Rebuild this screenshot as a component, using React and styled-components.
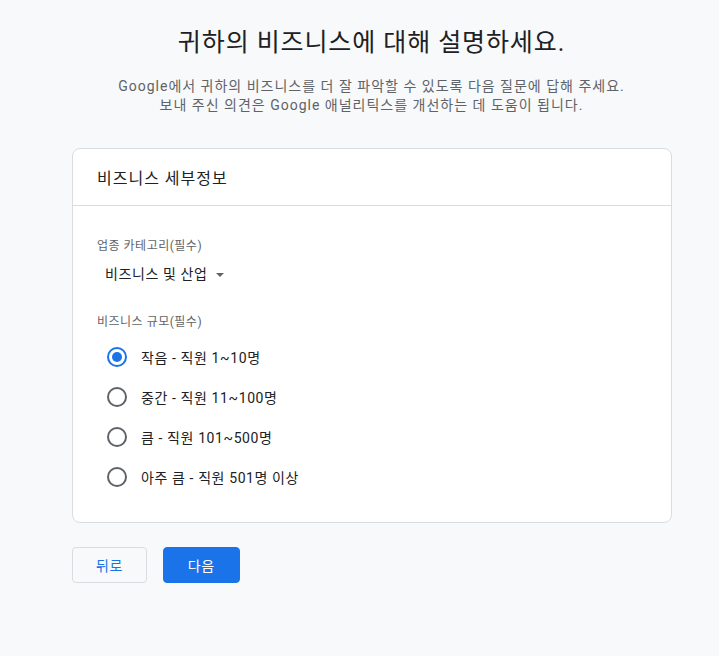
import React, { useState } from "react";
import styled, { createGlobalStyle } from "styled-components";

const GlobalStyle = createGlobalStyle`
  html, body {
    margin: 0;
    padding: 0;
    background: #f8f9fa;
    font-family: Roboto, "Noto Sans CJK KR", sans-serif;
    color: #202124;
  }
`;

const Page = styled.div`
  width: 719px;
  min-height: 656px;
  box-sizing: border-box;
  padding: 26px 48px 0 72px;
  display: flex;
  flex-direction: column;
`;

const Title = styled.h1`
  margin: 0;
  font-size: 25px;
  font-weight: 400;
  line-height: 34px;
  letter-spacing: 0.9px;
  text-align: center;
  color: #202124;
`;

const Subtitle = styled.p`
  margin: 17px 0 0;
  font-size: 14px;
  line-height: 19px;
  letter-spacing: 1px;
  text-align: center;
  color: #5f6368;
`;

const Card = styled.section`
  margin-top: 33px;
  width: 600px;
  box-sizing: border-box;
  background: #ffffff;
  border: 1px solid #dadce0;
  border-radius: 8px;
`;

const CardHeader = styled.div`
  height: 56px;
  display: flex;
  align-items: center;
  padding: 0 24px;
  font-size: 16px;
  letter-spacing: 1px;
  border-bottom: 1px solid #dadce0;
`;

const CardBody = styled.div`
  padding: 31px 24px 25px;
  display: flex;
  flex-direction: column;
`;

const Label = styled.div`
  font-size: 12px;
  line-height: 18px;
  letter-spacing: 0.5px;
  color: #5f6368;
`;

const Select = styled.button`
  margin: 9px 0 29px 8px;
  padding: 0;
  border: none;
  background: none;
  display: flex;
  align-items: center;
  gap: 8px;
  font: inherit;
  font-size: 14px;
  line-height: 20px;
  letter-spacing: 0.6px;
  color: #202124;
  cursor: pointer;
  align-self: flex-start;
`;

const Caret = styled.span`
  width: 0;
  height: 0;
  border-left: 4px solid transparent;
  border-right: 4px solid transparent;
  border-top: 4px solid #5f6368;
  margin-top: 2px;
`;

const RadioList = styled.div`
  margin-top: 6px;
  display: flex;
  flex-direction: column;
`;

const RadioRow = styled.label`
  height: 40px;
  display: flex;
  align-items: center;
  gap: 14px;
  padding-left: 10px;
  font-size: 14px;
  letter-spacing: 0.6px;
  cursor: pointer;
`;

const RadioCircle = styled.span`
  width: 20px;
  height: 20px;
  box-sizing: border-box;
  border-radius: 50%;
  border: 2px solid ${({ $checked }) => ($checked ? "#1a73e8" : "#5f6368")};
  display: flex;
  align-items: center;
  justify-content: center;

  &::after {
    content: "";
    width: 10px;
    height: 10px;
    border-radius: 50%;
    background: #1a73e8;
    display: ${({ $checked }) => ($checked ? "block" : "none")};
  }
`;

const Actions = styled.div`
  margin-top: 24px;
  display: flex;
  gap: 16px;
`;

const Button = styled.button`
  height: 36px;
  box-sizing: border-box;
  padding: 0 ${({ $primary }) => ($primary ? "24px" : "23px")};
  border-radius: 4px;
  font: inherit;
  font-size: 14px;
  letter-spacing: 0.5px;
  cursor: pointer;
  border: 1px solid ${({ $primary }) => ($primary ? "#1a73e8" : "#dadce0")};
  background: ${({ $primary }) => ($primary ? "#1a73e8" : "#f8f9fa")};
  color: ${({ $primary }) => ($primary ? "#ffffff" : "#1a73e8")};
`;

const sizes = [
  "작음 - 직원 1~10명",
  "중간 - 직원 11~100명",
  "큼 - 직원 101~500명",
  "아주 큼 - 직원 501명 이상",
];

export default function App() {
  const [size, setSize] = useState(0);

  return (
    <>
      <GlobalStyle />
      <Page>
        <Title>귀하의 비즈니스에 대해 설명하세요.</Title>
        <Subtitle>
          Google에서 귀하의 비즈니스를 더 잘 파악할 수 있도록 다음 질문에 답해 주세요.
          <br />
          보내 주신 의견은 Google 애널리틱스를 개선하는 데 도움이 됩니다.
        </Subtitle>

        <Card>
          <CardHeader>비즈니스 세부정보</CardHeader>
          <CardBody>
            <Label>업종 카테고리(필수)</Label>
            <Select>
              비즈니스 및 산업
              <Caret />
            </Select>

            <Label>비즈니스 규모(필수)</Label>
            <RadioList>
              {sizes.map((s, i) => (
                <RadioRow key={s} onClick={() => setSize(i)}>
                  <RadioCircle $checked={size === i} />
                  {s}
                </RadioRow>
              ))}
            </RadioList>
          </CardBody>
        </Card>

        <Actions>
          <Button>뒤로</Button>
          <Button $primary>다음</Button>
        </Actions>
      </Page>
    </>
  );
}
